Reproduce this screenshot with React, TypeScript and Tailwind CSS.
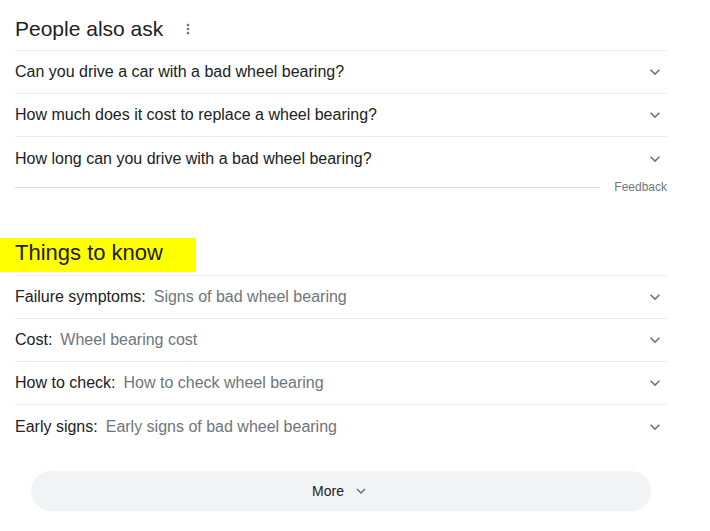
import React from 'react';

const questions = [
  'Can you drive a car with a bad wheel bearing?',
  'How much does it cost to replace a wheel bearing?',
  'How long can you drive with a bad wheel bearing?',
];

const things = [
  { label: 'Failure symptoms:', value: 'Signs of bad wheel bearing' },
  { label: 'Cost:', value: 'Wheel bearing cost' },
  { label: 'How to check:', value: 'How to check wheel bearing' },
  { label: 'Early signs:', value: 'Early signs of bad wheel bearing' },
];

const Chevron = ({ size = 20 }: { size?: number }) => (
  <svg width={size} height={size} viewBox="0 0 24 24" fill="#70757a">
    <path d="M16.59 8.59 12 13.17 7.41 8.59 6 10l6 6 6-6z" />
  </svg>
);

export default function App() {
  return (
    <div className="w-[710px] h-[531px] bg-white text-[#202124] font-['Liberation_Sans',Arial,sans-serif] pl-[15px] overflow-hidden">
      <div className="w-[652px]">
        {/* People also ask */}
        <div className="flex items-center h-[50px] pt-[7px]">
          <span className="text-[21px] leading-none">People also ask</span>
          <svg className="ml-[17px]" width="16" height="16" viewBox="0 0 24 24" fill="#70757a">
            <path d="M12 8c1.1 0 2-.9 2-2s-.9-2-2-2-2 .9-2 2 .9 2 2 2zm0 2c-1.1 0-2 .9-2 2s.9 2 2 2 2-.9 2-2-.9-2-2-2zm0 6c-1.1 0-2 .9-2 2s.9 2 2 2 2-.9 2-2-.9-2-2-2z" />
          </svg>
        </div>
        <div className="border-t border-[#ebebeb]">
          {questions.map((q, i) => (
            <div
              key={q}
              className={`flex items-center justify-between h-[43px] ${
                i < questions.length - 1 ? 'border-b border-[#ebebeb]' : ''
              }`}
            >
              <span className="text-[16px]">{q}</span>
              <span className="mr-[2px]">
                <Chevron />
              </span>
            </div>
          ))}
        </div>
        <div className="flex items-center h-[14px]">
          <div className="flex-1 border-t border-[#dadce0] mr-[14px]" />
          <span className="text-[12px] text-[#70757a]">Feedback</span>
        </div>

        {/* Things to know */}
        <div className="mt-[44px] h-[34px] -ml-[15px] pl-[15px] pb-[5px] w-[196px] bg-[#ffff00] flex items-center">
          <span className="text-[22px] leading-none">Things to know</span>
        </div>
        <div className="mt-[3px] border-t border-[#ebebeb]">
          {things.map((t, i) => (
            <div
              key={t.label}
              className={`flex items-center justify-between h-[43px] ${
                i < things.length - 1 ? 'border-b border-[#ebebeb]' : ''
              }`}
            >
              <span className="text-[16px]">
                {t.label}
                <span className="ml-[8px] text-[#70757a]">{t.value}</span>
              </span>
              <span className="mr-[2px]">
                <Chevron />
              </span>
            </div>
          ))}
        </div>

        <div className="mx-[16px] mt-[23px] h-[40px] rounded-full bg-[#f1f3f4] flex items-center justify-center">
          <span className="text-[14px]">More</span>
          <span className="ml-[8px] flex">
            <Chevron size={18} />
          </span>
        </div>
      </div>
    </div>
  );
}
